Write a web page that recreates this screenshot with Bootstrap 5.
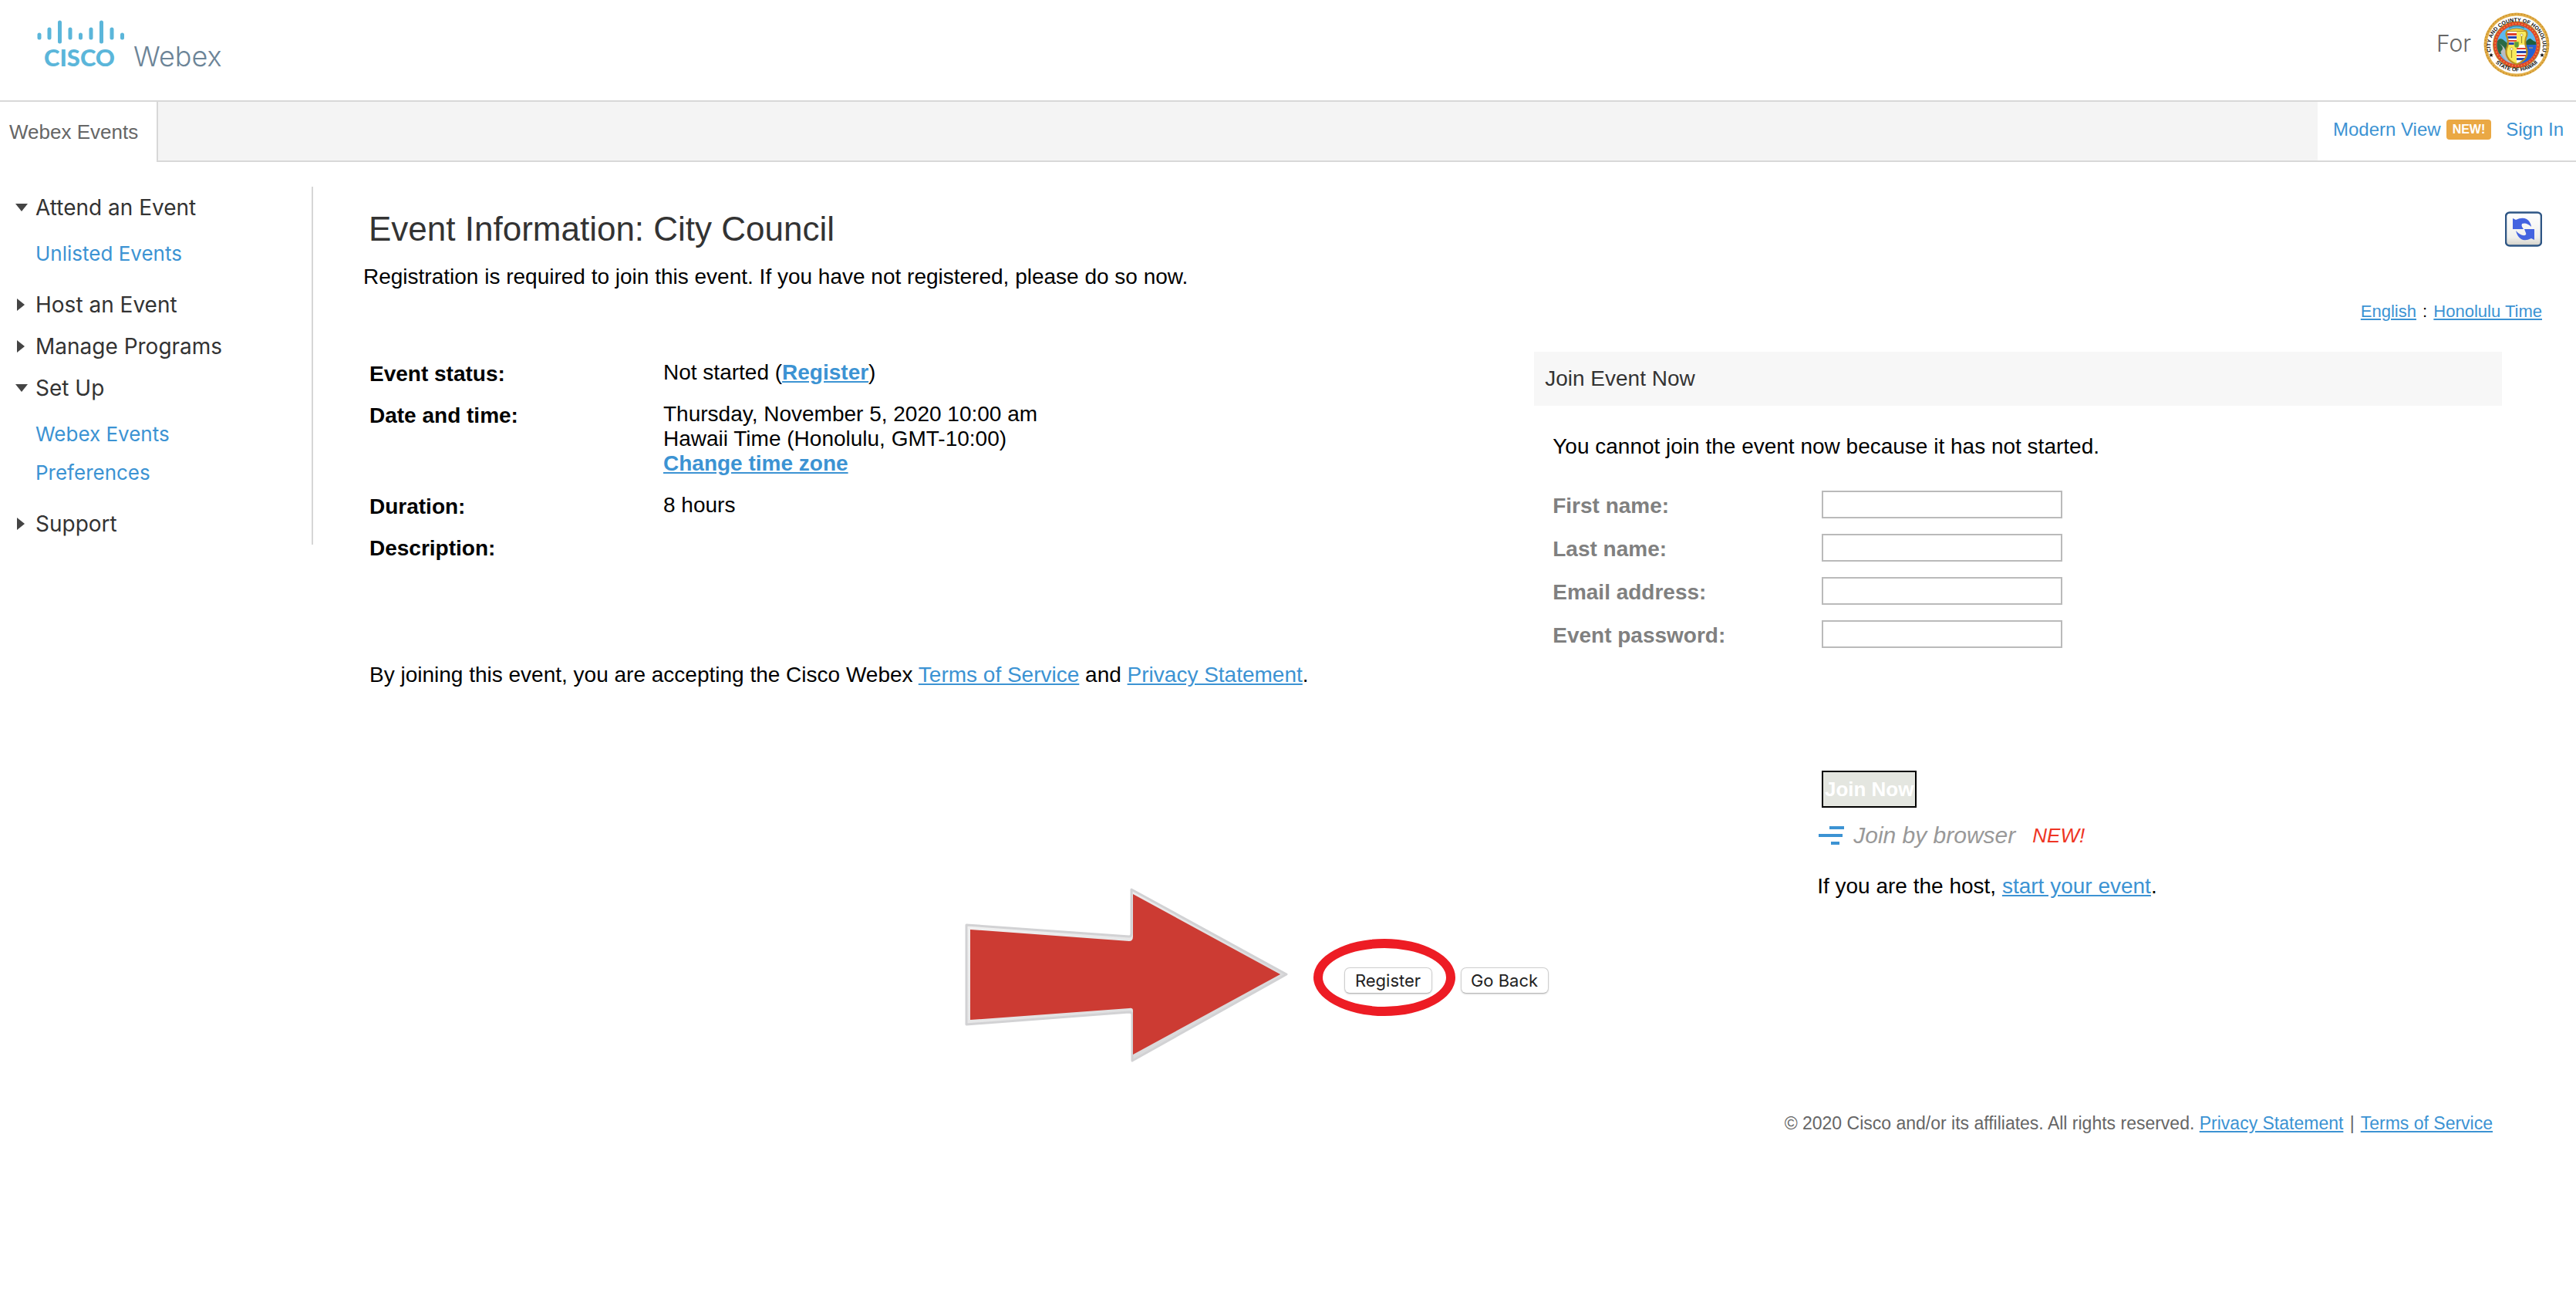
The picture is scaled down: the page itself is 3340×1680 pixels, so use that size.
<!DOCTYPE html>
<html lang="en">
<head>
<meta charset="utf-8">
<meta name="viewport" content="width=device-width, initial-scale=1">
<title>Event Information: City Council</title>
<link href="https://cdn.jsdelivr.net/npm/bootstrap@5.3.0/dist/css/bootstrap.min.css" rel="stylesheet">
<style>
  body { font-family: "Liberation Sans", Arial, sans-serif; font-size: 28px; line-height: 32px; color: #000; background: #fff; }
  a { color: #3c93d3; }
  .site-head { height: 132px; padding: 0 34px 0 48px; border-bottom: 2px solid #d8d8d8; }
  .head-logo { margin-top: 16px; }
  .for-org { font-family: Inter, sans-serif; font-weight: 300; font-size: 30px; color: #666; margin: 16px 0 0; gap: 16px; }
  .for-org span { padding-bottom: 5px; }
  .tab-strip { height: 78px; }
  .tab-active { width: 205px; padding-left: 12px; border-right: 2px solid #d8d8d8; color: #666; font-size: 26px; }
  .tab-fill { background: #f4f4f4; border-bottom: 2px solid #d8d8d8; }
  .tab-links { border-bottom: 2px solid #d8d8d8; padding: 0 16px 4px 20px; font-size: 24px; }
  .tag-new { background: #eaa844; border-radius: 4px; font-size: 16px; line-height: 26px; padding: 0 8px; margin: 0 19px 0 7px; color: #fff; }
  .side-nav { width: 406px; margin-top: 32px; border-right: 2px solid #d6d6d6; font-family: Inter, sans-serif; }
  .side-nav button { font-size: 28px; line-height: 54px; color: #333; padding: 0 0 0 20px; }
  .side-nav svg { width: 16px; height: 16px; margin-right: 10px; fill: #444; }
  .side-nav ul ul { padding: 8px 0 14px 46px; }
  .side-nav ul ul li { font-size: 26px; line-height: 50px; }
  .page-main { margin-left: 4px; }
  .main-inner { padding: 62px 96px 0 61px; }
  .head-row { margin-right: -52px; }
  .page-title { font-size: 44px; line-height: 50px; color: #333; margin: 0 0 21px; padding-left: 7px; font-weight: 400; }
  .lang-row { font-size: 22px; line-height: 28px; margin-top: 70px; }
  .lang-row span { margin: 0 2px; }
  .refresh-btn { margin-top: 2px; }
  .body-row { margin-top: 38px; }
  .info-col { flex: 0 0 54.75%; padding: 11px 0 0 8px; }
  .facts { display: grid; grid-template-columns: 381px 1fr; row-gap: 18px; margin-bottom: 130px; }
  .facts dt { line-height: 36px; }
  .facts dd { margin: 0; padding-bottom: 4px; }
  .join-title { background: #f7f7f7; color: #333; font-size: 28px; line-height: 70px; padding-left: 14px; margin: 0 0 37px; font-weight: 400; }
  .join-body { padding-left: 24px; }
  .join-note { margin-bottom: 41px; }
  .field-row { height: 40px; margin-bottom: 16px; }
  .field-row label { width: 349px; line-height: 40px; font-weight: 700; color: #808080; }
  .field-row input { width: 312px; height: 36px; border: 2px solid #bababa; border-radius: 0; padding: 0 6px; min-height: 0; }
  .join-actions { padding-left: 343px; padding-top: 139px; }
  .join-btn { width: 123px; height: 48px; margin-left: 6px; background: #e4e6e0; border: 2px solid #000; border-radius: 0; color: #fff; font-weight: 700; font-size: 26px; line-height: 32px; padding: 0; white-space: nowrap; }
  .browser-line { font-size: 30px; line-height: 36px; margin: 18px 0 32px; color: #999; font-style: italic; }
  .browser-line svg { margin-right: 11px; }
  .flag-new { color: #ee3524; font-size: 26px; margin-left: 22px; }
  .action-row { margin-top: 89px; gap: 37px; position: relative; }
  .sys-btn { width: 114px; height: 34px; border: 1px solid #cfcfcf; border-bottom-color: #b8b8b8; border-radius: 7px; background: #fff; box-shadow: 0 1px 2px rgba(0,0,0,.15); font-family: Inter, sans-serif; font-size: 22px; line-height: 32px; color: #222; padding: 0; }
  .call-out { position: absolute; left: 50%; top: -114px; margin-left: -635px; pointer-events: none; }
  .page-foot { margin-top: 154px; padding-right: 108px; font-size: 23px; line-height: 28px; color: #666; }
  .page-foot span { margin: 0 2px; }
</style>
</head>
<body>
<header class="site-head d-flex justify-content-between align-items-start">
  <svg class="head-logo" width="264" height="90" viewBox="48 16 264 90" role="img" aria-label="Cisco Webex">
    <g stroke="#5bb6da" stroke-width="5" stroke-linecap="round">
      <path d="M51 45v4M64 38v11M77.500 29v25M91 38v11M104.500 45v4M118 38v11M131.500 29v25M145 38v11M158.500 45v4"/>
    </g>
    <text x="57" y="86" font-family="Lato, sans-serif" font-weight="900" font-size="31" fill="#5bb6da">CISCO</text>
    <text x="173" y="86" font-family="Inter, sans-serif" font-weight="300" font-size="36" fill="#6c8497">Webex</text>
  </svg>
  <div class="for-org d-flex align-items-center">
    <span>For</span>
    <svg width="86" height="84" viewBox="0 0 86 84" role="img" aria-label="City and County of Honolulu seal">
      <defs>
        <path id="arcTop" d="M12.330 58 A34 32 0 1 1 73.670 58"/>
        <path id="arcBottom" d="M7 52 A38 36 0 0 0 79 52"/>
        <clipPath id="inner"><ellipse cx="43" cy="42" rx="25.500" ry="25"/></clipPath>
        <clipPath id="shieldClip"><path d="M31 24h24q3 4 0 9-2 8 1 14 2 9-3 14-5 5-10 6-5-1-10-6-5-6-3-14 3-6 1-14-3-5 0-9z"/></clipPath>
      </defs>
      <ellipse cx="43" cy="42" rx="42.500" ry="41.500" fill="#e3b04b"/>
      <ellipse cx="43" cy="42" rx="41" ry="40" fill="none" stroke="#c98f2b" stroke-width="1.500" stroke-dasharray="2 2"/>
      <ellipse cx="43" cy="42" rx="38.500" ry="37.500" fill="#fff"/>
      <ellipse cx="43" cy="42" rx="31" ry="30.500" fill="#b98a2e"/>
      <ellipse cx="43" cy="42" rx="30" ry="29.500" fill="#e0452a"/>
      <ellipse cx="43" cy="42" rx="27.800" ry="27.300" fill="none" stroke="#f0a03c" stroke-width="1.500" stroke-dasharray="1.500 2.500"/>
      <ellipse cx="43" cy="42" rx="25.500" ry="25" fill="#5cb8ee"/>
      <g clip-path="url(#inner)">
        <path d="M43 42h26v26H43z" fill="#2462d2"/>
        <path d="M52 42q6-9 9-8 4 4 9 5v3z" fill="#1f5f3d"/>
        <path d="M16 42q3-10 9-7 5 4 8 7v12H16z" fill="#2b6a45"/>
        <path d="M20 40q8 6 3 10-3 4 12 18h12V58q-16 0-18-8-2-6-9-10z" fill="#b9bcc2"/>
        <path d="M59 46h5" stroke="#e0a050" stroke-width="1"/>
        <path d="M33 20q10-5 20 0" stroke="#3a8f9a" stroke-width="2" fill="none"/>
      </g>
      <g clip-path="url(#shieldClip)">
        <path d="M26 20h17v22H26zM43 42h17v28H43z" fill="#fff"/>
        <path d="M43 20h17v22H43zM26 42h17v28H26z" fill="#f8ea5c"/>
        <path d="M26 27h17v3H26zM26 36h17v2H26zM43 46h17v2H43zM43 55h17v2H43z" fill="#e0402a"/>
        <path d="M26 31h17v3H26zM26 39h17v3H26zM43 50h17v3H43zM43 59h17v3H43z" fill="#2747b0"/>
      </g>
      <path d="M31 24h24q3 4 0 9-2 8 1 14 2 9-3 14-5 5-10 6-5-1-10-6-5-6-3-14 3-6 1-14-3-5 0-9z" fill="none" stroke="#b98e1e" stroke-width="2.200"/>
      <path d="M31 24q12-6 24 0" fill="#f3d94a" stroke="#b98e1e" stroke-width="1"/>
      <path d="M49.500 30v10M36.500 49v10" stroke="#9c8a2a" stroke-width="1.200"/>
      <circle cx="49.500" cy="29.500" r="1.600" fill="#fff" stroke="#9c8a2a" stroke-width=".6"/>
      <circle cx="36.500" cy="47.500" r="1.600" fill="#fff" stroke="#9c8a2a" stroke-width=".6"/>
      <path d="M40 38h6v6q-3 4-6 0z" fill="#5a9e3a" stroke="#e3cf3c" stroke-width=".8"/>
      <g font-family="Liberation Sans, sans-serif" font-weight="700" font-size="7" fill="#111">
        <text text-anchor="middle"><textPath href="#arcTop" startOffset="50%">CITY AND COUNTY OF HONOLULU</textPath></text>
        <text text-anchor="middle"><textPath href="#arcBottom" startOffset="50%">STATE OF HAWAII</textPath></text>
      </g>
      <path d="M10 52.500l.8 2 2 .1-1.600 1.300.6 2-1.800-1.100-1.800 1.100.6-2-1.600-1.300 2-.1zM76 52.500l.8 2 2 .1-1.600 1.300.6 2-1.800-1.100-1.800 1.100.6-2-1.600-1.300 2-.1z" fill="#111"/>
    </svg>
  </div>
</header>

<nav class="tab-strip d-flex" aria-label="Site">
  <div class="tab-active d-flex align-items-center">Webex Events</div>
  <div class="tab-fill flex-grow-1"></div>
  <div class="tab-links d-flex align-items-center">
    <a class="text-decoration-none" href="#">Modern View</a>
    <span class="tag-new fw-bold">NEW!</span>
    <a class="text-decoration-none" href="#">Sign In</a>
  </div>
</nav>

<div class="d-flex align-items-start">
  <nav class="side-nav flex-shrink-0" aria-label="Events">
    <ul class="list-unstyled mb-0">
      <li>
        <button class="btn border-0 d-flex align-items-center" type="button"><svg viewBox="0 0 16 16"><path d="M0 3h16l-8 10z"/></svg>Attend an Event</button>
        <ul class="list-unstyled"><li><a class="text-decoration-none" href="#">Unlisted Events</a></li></ul>
      </li>
      <li><button class="btn border-0 d-flex align-items-center" type="button"><svg viewBox="0 0 16 16"><path d="M2 0v16l10-8z"/></svg>Host an Event</button></li>
      <li><button class="btn border-0 d-flex align-items-center" type="button"><svg viewBox="0 0 16 16"><path d="M2 0v16l10-8z"/></svg>Manage Programs</button></li>
      <li>
        <button class="btn border-0 d-flex align-items-center" type="button"><svg viewBox="0 0 16 16"><path d="M0 3h16l-8 10z"/></svg>Set Up</button>
        <ul class="list-unstyled">
          <li><a class="text-decoration-none" href="#">Webex Events</a></li>
          <li><a class="text-decoration-none" href="#">Preferences</a></li>
        </ul>
      </li>
      <li><button class="btn border-0 d-flex align-items-center" type="button"><svg viewBox="0 0 16 16"><path d="M2 0v16l10-8z"/></svg>Support</button></li>
    </ul>
  </nav>

  <main class="page-main flex-grow-1">
    <div class="main-inner">
      <div class="head-row d-flex justify-content-between align-items-start">
        <div>
          <h1 class="page-title">Event Information: City Council</h1>
          <p class="mb-0">Registration is required to join this event. If you have not registered, please do so now.</p>
        </div>
        <div class="d-flex flex-column align-items-end">
          <button class="refresh-btn btn border-0 p-0 d-flex" type="button" aria-label="Refresh">
            <svg width="48" height="46" viewBox="0 0 48 46">
              <defs><linearGradient id="face" x1="0" y1="0" x2="0" y2="1"><stop offset="0" stop-color="#fff"/><stop offset=".75" stop-color="#f0f0ec"/><stop offset="1" stop-color="#d3d0c8"/></linearGradient></defs>
              <rect x="1" y="1.500" width="46" height="43" rx="5" fill="url(#face)" stroke="#2d5584" stroke-width="2.500"/>
              <path d="M10 9l4 2q8-4 14-1 5 3 6 10-6-6-12-4-1 2 0 4l2 3H10z" fill="#4464e0"/>
              <path d="M38 37l-4-2q-8 4-13 1-5-3-7-11 6 7 12 6 2-1 1-3l-2-5h13z" fill="#4464e0"/>
            </svg>
          </button>
          <div class="lang-row"><a href="#">English</a> <span>:</span> <a href="#">Honolulu Time</a></div>
        </div>
      </div>

      <div class="body-row d-flex">
        <section class="info-col">
          <dl class="facts">
            <dt>Event status:</dt><dd>Not started (<a class="fw-bold" href="#">Register</a>)</dd>
            <dt>Date and time:</dt><dd>Thursday, November 5, 2020 10:00 am<br>Hawaii Time (Honolulu, GMT-10:00)<br><a class="fw-bold" href="#">Change time zone</a></dd>
            <dt>Duration:</dt><dd>8 hours</dd>
            <dt>Description:</dt><dd></dd>
          </dl>
          <p class="mb-0">By joining this event, you are accepting the Cisco Webex <a href="#">Terms of Service</a> and <a href="#">Privacy Statement</a>.</p>
        </section>

        <section class="flex-grow-1">
          <h2 class="join-title">Join Event Now</h2>
          <form class="join-body">
            <p class="join-note">You cannot join the event now because it has not started.</p>
            <div class="field-row d-flex align-items-start"><label for="first">First name:</label><input class="form-control" id="first" type="text"></div>
            <div class="field-row d-flex align-items-start"><label for="last">Last name:</label><input class="form-control" id="last" type="text"></div>
            <div class="field-row d-flex align-items-start"><label for="mail">Email address:</label><input class="form-control" id="mail" type="email"></div>
            <div class="field-row d-flex align-items-start"><label for="pass">Event password:</label><input class="form-control" id="pass" type="password"></div>
            <div class="join-actions">
              <button class="join-btn btn d-block" type="button">Join Now</button>
              <p class="browser-line d-flex align-items-center">
                <svg width="36" height="26" viewBox="0 0 36 26" aria-hidden="true"><path d="M16 3h19M2 13h31M18 23h11" stroke="#3c93d3" stroke-width="4"/></svg>
                <span>Join by browser</span><span class="flag-new">NEW!</span>
              </p>
              <p class="mb-0">If you are the host, <a href="#">start your event</a>.</p>
            </div>
          </form>
        </section>
      </div>
    </div>

    <div class="action-row d-flex justify-content-center">
      <button class="sys-btn btn" type="button">Register</button>
      <button class="sys-btn btn" type="button">Go Back</button>
      <svg class="call-out" width="660" height="250" viewBox="1240 1140 660 250" aria-hidden="true">
        <defs><linearGradient id="rim" x1="0" y1="0" x2="1" y2="1"><stop offset="0" stop-color="#f4f4f4"/><stop offset="1" stop-color="#d2d2d4"/></linearGradient></defs>
        <path d="M1253 1199L1464 1214Q1467 1214 1467 1210V1153L1668 1263L1468 1375V1315Q1468 1312 1464 1312L1253 1328Z" fill="url(#rim)" stroke="#d2d2d4" stroke-width="3" stroke-linejoin="round"/>
        <path d="M1258 1205L1464 1220Q1469 1220 1469 1214V1159L1660 1263L1469 1367V1310Q1469 1306 1464 1307L1258 1322Z" fill="#cc3b33"/>
        <path fill-rule="evenodd" fill="#ed1c24" d="M1703 1267a92 50 0 1 0 184 0a92 50 0 1 0-184 0zM1715 1267a80 38 0 1 0 160 0a80 38 0 1 0-160 0z"/>
      </svg>
    </div>

    <footer class="page-foot text-end">© 2020 Cisco and/or its affiliates. All rights reserved. <a href="#">Privacy Statement</a> <span>|</span> <a href="#">Terms of Service</a></footer>
  </main>
</div>
<script src="https://cdn.jsdelivr.net/npm/bootstrap@5.3.0/dist/js/bootstrap.bundle.min.js"></script>
</body>
</html>
